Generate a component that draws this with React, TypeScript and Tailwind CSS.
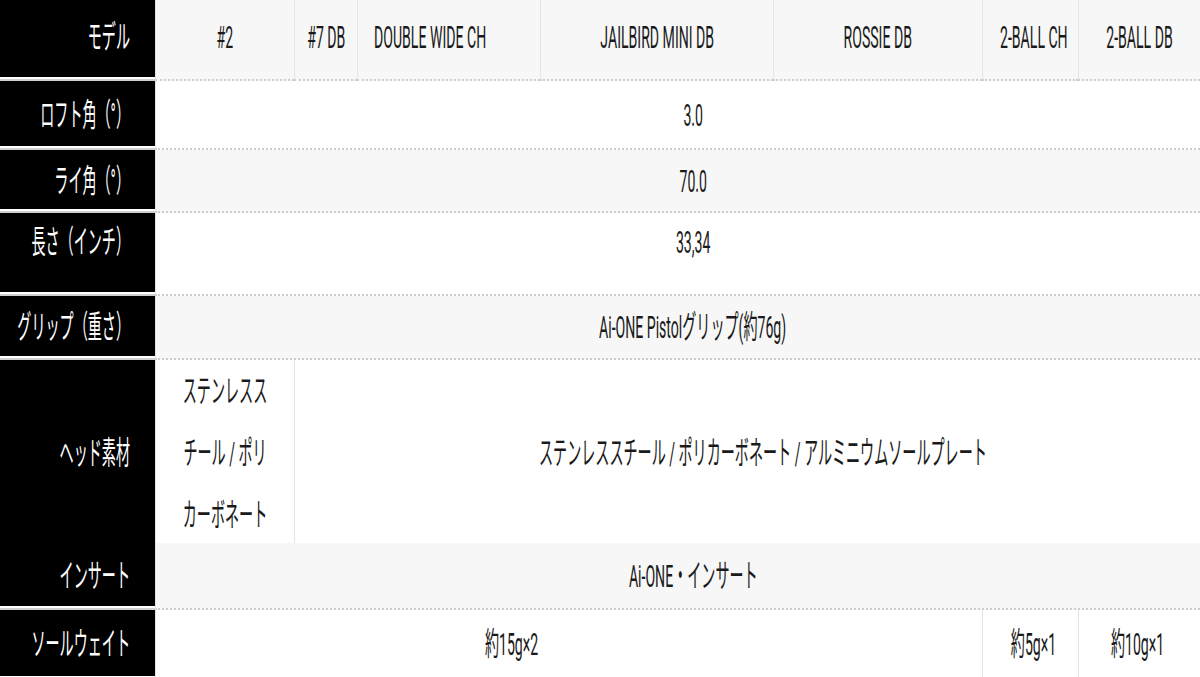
import type { ReactNode } from 'react';

type Cell = {
  text: ReactNode;
  span?: string;
  cls?: string;
  origin?: string;
};

type Row = {
  label: string;
  height: string;
  bg: string;
  align?: string;
  cells: Cell[];
};

const cols = 'grid grid-cols-[155px_139px_63px_183px_233px_209px_96px_122px]';

const rows: Row[] = [
  {
    label: 'モデル',
    height: 'h-[81px]',
    bg: 'bg-[#f7f7f7]',
    align: 'items-center pb-[5px]',
    cells: [
      { text: '#2' },
      { text: '#7 DB' },
      { text: 'DOUBLE WIDE CH', cls: 'justify-start pl-4', origin: 'origin-left' },
      { text: 'JAILBIRD MINI DB' },
      { text: 'ROSSIE DB' },
      { text: '2-BALL CH', cls: 'pl-[6px]' },
      { text: '2-BALL DB' },
    ],
  },
  {
    label: 'ロフト角（°）',
    height: 'h-[69px]',
    bg: 'bg-white',
    cells: [{ text: '3.0', span: 'col-span-7', cls: 'pl-[30px]' }],
  },
  {
    label: 'ライ角（°）',
    height: 'h-[63px]',
    bg: 'bg-[#f7f7f7]',
    cells: [{ text: '70.0', span: 'col-span-7', cls: 'pl-[30px]' }],
  },
  {
    label: '長さ（インチ）',
    height: 'h-[83px]',
    bg: 'bg-white',
    align: 'items-start pt-[9px]',
    cells: [{ text: '33,34', span: 'col-span-7', cls: 'pl-[30px]' }],
  },
  {
    label: 'グリップ（重さ）',
    height: 'h-[64px]',
    bg: 'bg-[#f7f7f7]',
    cells: [{ text: 'Ai-ONE Pistolグリップ(約76g)', span: 'col-span-7', cls: 'pl-[30px]' }],
  },
  {
    label: 'ヘッド素材',
    height: 'h-[183px]',
    bg: 'bg-white',
    cells: [
      {
        text: (
          <span className="block text-center leading-[62px]">
            ステンレスス
            <br />
            チール / ポリ
            <br />
            カーボネート
          </span>
        ),
      },
      {
        text: 'ステンレススチール / ポリカーボネート / アルミニウムソールプレート',
        span: 'col-span-6',
        cls: 'pl-[30px]',
      },
    ],
  },
  {
    label: 'インサート',
    height: 'h-[67px]',
    bg: 'bg-[#f7f7f7]',
    cells: [{ text: 'Ai-ONE・インサート', span: 'col-span-7', cls: 'pl-[30px]' }],
  },
  {
    label: 'ソールウェイト',
    height: 'h-[70px]',
    bg: 'bg-white',
    cells: [
      { text: '約15g×2', span: 'col-span-5', cls: 'pr-[115px]' },
      { text: '約5g×1', cls: 'pl-[6px]' },
      { text: '約10g×1', cls: 'pr-[4px]' },
    ],
  },
];

function Squeeze({ children, origin = 'origin-center' }: { children: ReactNode; origin?: string }) {
  return (
    <span className={`inline-block shrink-0 whitespace-nowrap leading-[40px] scale-x-[0.44] ${origin}`}>
      {children}
    </span>
  );
}

export default function App() {
  return (
    <div className="h-[677px] w-[1200px] overflow-hidden bg-white font-['Roboto','Noto_Sans_CJK_JP',sans-serif] text-[32px] text-[#1a1a1a]">
      {rows.map((row) => (
        <div key={row.label} className={`${cols} ${row.height}`}>
          {/* 見出しセル */}
          <div
            className={`flex justify-end border-b-2 border-[#cfcfcf] bg-black pr-[25px] text-white shadow-[inset_0_-2px_0_#fff] ${row.align ?? 'items-center'}`}
          >
            <Squeeze origin="origin-right">{row.label}</Squeeze>
          </div>

          {row.cells.map((cell, i) => (
            <div
              key={i}
              className={`flex overflow-visible border-b-2 border-l border-dotted border-[#cdcdcd] [border-left-style:solid] border-l-[#e4e4e4] ${row.bg} ${row.align ?? 'items-center'} ${cell.span ?? ''} ${cell.cls ?? 'justify-center'} ${cell.cls && !cell.cls.includes('justify') ? 'justify-center' : ''}`}
            >
              <Squeeze origin={cell.origin}>{cell.text}</Squeeze>
            </div>
          ))}
        </div>
      ))}
    </div>
  );
}
